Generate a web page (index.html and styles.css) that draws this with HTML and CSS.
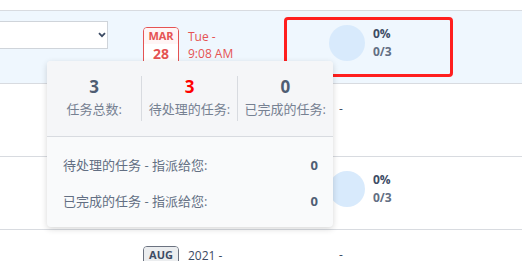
FILE: index.html
```html
<!DOCTYPE html>
<html lang="zh-CN">
<head>
  <meta charset="UTF-8" />
  <title>任务</title>
  <link rel="stylesheet" href="styles.css">
</head>
<body>

  <div class="tabel">
    <div class="strip"></div>

    <div class="row aktiv">
      <div class="cell c-select">
        <div class="select">
          <svg width="8" height="6" viewBox="0 0 8 6"><path d="M1 1.2 L4 4.2 L7 1.2" fill="none" stroke="#3c4b64" stroke-width="1.8"/></svg>
        </div>
      </div>
      <div class="cell c-date">
        <div class="cal rod">
          <div class="mon">MAR</div>
          <div class="dag">28</div>
        </div>
        <div class="naar rod-tekst">Tue -<br>9:08 AM</div>
      </div>
      <div class="cell c-progress markeret">
        <div class="pie"></div>
        <div class="pct"><b>0%</b><span>0/3</span></div>
      </div>
      <div class="cell"></div>
    </div>

    <div class="row">
      <div class="cell c-select"></div>
      <div class="cell c-date"></div>
      <div class="cell c-progress"><span class="streg">-</span></div>
      <div class="cell"></div>
    </div>

    <div class="row">
      <div class="cell c-select"></div>
      <div class="cell c-date"></div>
      <div class="cell c-progress">
        <div class="pie"></div>
        <div class="pct"><b>0%</b><span>0/3</span></div>
      </div>
      <div class="cell"></div>
    </div>

    <div class="row">
      <div class="cell c-select"></div>
      <div class="cell c-date">
        <div class="cal graa">
          <div class="mon">AUG</div>
          <div class="dag">12</div>
        </div>
        <div class="naar">2021 -<br>&nbsp;</div>
      </div>
      <div class="cell c-progress"><span class="streg">-</span></div>
      <div class="cell"></div>
    </div>
  </div>

  <!-- popover over tabellen -->
  <div class="popover">
    <div class="pop-top">
      <div class="stat">
        <div class="tal">3</div>
        <div class="lbl">任务总数:</div>
      </div>
      <div class="stat">
        <div class="tal rod-tal">3</div>
        <div class="lbl">待处理的任务:</div>
      </div>
      <div class="stat">
        <div class="tal">0</div>
        <div class="lbl">已完成的任务:</div>
      </div>
    </div>
    <div class="pop-body">
      <div class="linje"><span>待处理的任务 - 指派给您:</span><b>0</b></div>
      <div class="linje"><span>已完成的任务 - 指派给您:</span><b>0</b></div>
    </div>
  </div>

</body>
</html>
```

FILE: styles.css
```css
:root {
  --kant: #d8dbe0;
  --moerk: #3c4b64;
  --graa: #768192;
  --rod: #e55353;
}

body {
  margin: 0;
  font-family: "Open Sans", "Noto Sans CJK SC", sans-serif;
  font-size: 12px;
  color: var(--moerk);
  background: #fff;
  overflow: hidden;
  position: relative;
  height: 261px;
}

.strip {
  height: 10px;
  border-bottom: 1px solid var(--kant);
}

.row {
  display: grid;
  grid-template-columns: 130px 154px 169px 1fr;
  height: 72px;
  border-bottom: 1px solid var(--kant);
}

.row.aktiv {
  background-color: #eff7fe;
}

.cell {
  display: flex;
  align-items: flex-start;
}

/* select-felt, venstre kant er uden for billedet */
.c-select {
  padding-top: 10px;
}

.select {
  width: 120px;
  height: 26px;
  margin-left: -15px;
  background: #fff;
  border: 1px solid #cfd4da;
  display: flex;
  align-items: center;
  justify-content: flex-end;
  padding-right: 1px;
}

.c-date {
  padding: 16px 0 0 13px;
  gap: 9px;
}

.cal {
  width: 34px;
  border: 1px solid;
  border-radius: 4px;
  text-align: center;
  font-weight: bold;
  overflow: hidden;
}

.cal .mon {
  font-size: 11px;
  line-height: 16px;
}

.cal .dag {
  font-size: 14px;
  line-height: 20px;
  background: #fff;
}

.cal.rod {
  border-color: var(--rod);
  color: var(--rod);
}

.cal.rod .mon {
  background: #fff5f5;
}

.cal.graa {
  border-color: #6b7280;
  color: var(--moerk);
}

.cal.graa .mon {
  background: #ebedef;
}

.naar {
  font-size: 12px;
  line-height: 17px;
  margin-top: 1px;
}

.rod-tekst {
  color: var(--rod);
}

.c-progress {
  position: relative;
  padding: 14px 0 0 45px;
  gap: 8px;
}

.pie {
  width: 36px;
  height: 36px;
  border-radius: 50%;
  background-color: #d8eafc;
}

.pct {
  display: flex;
  flex-direction: column;
  line-height: 18px;
}

.pct b {
  color: var(--moerk);
}

.pct span {
  color: #636f83;
  font-weight: bold;
}

.streg {
  margin: 2px 0 0 10px;
  font-size: 12px;
}

/* rød markering rundt om cellen */
.markeret::after {
  content: "";
  position: absolute;
  left: 0;
  top: 6px;
  width: 163px;
  height: 54px;
  border: 3px solid #ff1f1f;
  border-radius: 4px;
}

.popover {
  position: absolute;
  left: 47px;
  top: 61px;
  width: 286px;
  background-color: #f9fafb;
  border-radius: 4px;
  box-shadow: 0 2px 6px rgba(0,0,0,0.16);
  overflow: hidden;
}

.pop-top {
  display: grid;
  grid-template-columns: repeat(3, 1fr);
  padding: 15px 0;
  background-color: #f5f6f8;
  border-bottom: 1px solid var(--kant);
}

.stat {
  text-align: center;
  border-right: 1px solid var(--kant);
}

.stat:last-child {
  border-right: none;
}

.tal {
  font-size: 17px;
  font-weight: bold;
  line-height: 22px;
  color: #4f5d73;
}

.tal.rod-tal {
  color: #ff0000;
}

.lbl {
  font-size: 13px;
  line-height: 23px;
  color: var(--graa);
}

.pop-body {
  padding: 10px 15px 8px 16px;
}

.linje {
  display: flex;
  justify-content: space-between;
  line-height: 36px;
  font-size: 13px;
  color: #636f83;
}

.linje b {
  color: #4f5d73;
}
```
